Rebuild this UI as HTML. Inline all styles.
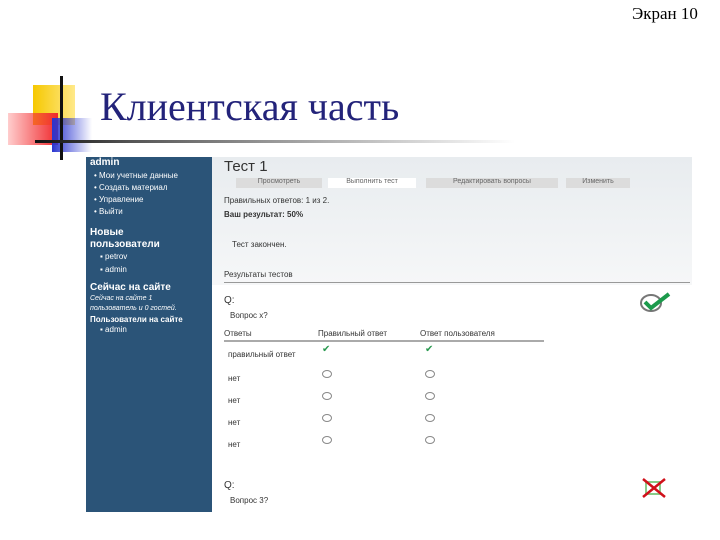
<!DOCTYPE html>
<html><head><meta charset="utf-8"><style>
body{margin:0;width:720px;height:540px;background:#fff;position:relative;overflow:hidden;font-family:"Liberation Sans","DejaVu Sans",sans-serif}
.a{position:absolute;white-space:nowrap}
.sb{color:#fff;font-size:8px}
.t{font-size:8px;color:#333}
.c{width:8px;height:6px;border:1px solid #888;border-radius:50%}
</style></head><body>
<div class="a" style="left:632px;top:4px;font:17px 'Liberation Serif',serif;color:#000">Экран 10</div>
<div class="a" style="left:33px;top:85px;width:42px;height:40px;background:linear-gradient(90deg,#f6c800,#ffe98a)"></div>
<div class="a" style="left:8px;top:113px;width:50px;height:32px;background:linear-gradient(90deg,rgba(255,90,90,0.3),#f0282c)"></div>
<div class="a" style="left:52px;top:118px;width:40px;height:34px;background:linear-gradient(90deg,#2a35d0,rgba(60,70,220,0))"></div>
<div class="a" style="left:60px;top:76px;width:3px;height:84px;background:#111"></div>
<div class="a" style="left:35px;top:140px;width:480px;height:3px;background:linear-gradient(90deg,#111,#555 20%,#999 50%,rgba(200,200,200,0))"></div>
<div class="a" style="left:100px;top:83px;font:40px 'Liberation Serif',serif;color:#23237a">Клиентская часть</div>

<div class="a" style="left:86px;top:157px;width:126px;height:355px;background:#2b5478"></div>
<div class="a" style="left:212px;top:157px;width:480px;height:128px;background:linear-gradient(180deg,#e8ecef,#f6f7f8)"></div>
<div class="a sb" style="left:90px;top:157px;font-size:10px;font-weight:bold">admin</div>
<div class="a sb" style="left:94px;top:170px;line-height:12px">• Мои учетные данные<br>• Создать материал<br>• Управление<br>• Выйти</div>
<div class="a sb" style="left:90px;top:227px;font-size:10px;line-height:12px;font-weight:bold">Новые<br>пользователи</div>
<div class="a sb" style="left:100px;top:250px;line-height:13px">▪ petrov<br>▪ admin</div>
<div class="a sb" style="left:90px;top:282px;font-size:10px;font-weight:bold">Сейчас на сайте</div>
<div class="a sb" style="left:90px;top:294px;line-height:10px;font-style:italic;font-size:7px">Сейчас на сайте 1<br>пользователь и 0 гостей.</div>
<div class="a sb" style="left:90px;top:315px;font-weight:bold">Пользователи на сайте</div>
<div class="a sb" style="left:100px;top:325px">▪ admin</div>

<div class="a" style="left:224px;top:158px;font-size:15px;color:#333">Тест 1</div>
<div class="a" style="left:236px;top:178px;width:86px;height:10px;background:#dcdcdc;font-size:7px;color:#666;text-align:center">Просмотреть</div>
<div class="a" style="left:328px;top:178px;width:88px;height:10px;background:#fff;font-size:7px;color:#666;text-align:center">Выполнить тест</div>
<div class="a" style="left:426px;top:178px;width:132px;height:10px;background:#dcdcdc;font-size:7px;color:#666;text-align:center">Редактировать вопросы</div>
<div class="a" style="left:566px;top:178px;width:64px;height:10px;background:#dcdcdc;font-size:7px;color:#666;text-align:center">Изменить</div>
<div class="a t" style="left:224px;top:196px">Правильных ответов: 1 из 2.</div>
<div class="a t" style="left:224px;top:210px;font-weight:bold">Ваш результат: 50%</div>
<div class="a t" style="left:232px;top:240px">Тест закончен.</div>
<div class="a t" style="left:224px;top:270px">Результаты тестов</div>
<div class="a" style="left:224px;top:282px;width:466px;height:1px;background:#999"></div>
<div class="a t" style="left:224px;top:295px;font-size:10px">Q:</div>
<div class="a t" style="left:230px;top:311px">Вопрос х?</div>
<div class="a t" style="left:224px;top:329px">Ответы</div>
<div class="a t" style="left:318px;top:329px">Правильный ответ</div>
<div class="a t" style="left:420px;top:329px">Ответ пользователя</div>
<div class="a" style="left:224px;top:340px;width:320px;height:2px;background:#aaa"></div>
<div class="a t" style="left:228px;top:350px">правильный ответ</div>
<div class="a" style="left:322px;top:344px;color:#2a9a50;font-size:10px">✔</div>
<div class="a" style="left:425px;top:344px;color:#2a9a50;font-size:10px">✔</div>
<div class="a t" style="left:228px;top:374px">нет</div>
<div class="a t" style="left:228px;top:396px">нет</div>
<div class="a t" style="left:228px;top:418px">нет</div>
<div class="a t" style="left:228px;top:440px">нет</div>
<div class="a c" style="left:322px;top:370px"></div><div class="a c" style="left:425px;top:370px"></div>
<div class="a c" style="left:322px;top:392px"></div><div class="a c" style="left:425px;top:392px"></div>
<div class="a c" style="left:322px;top:414px"></div><div class="a c" style="left:425px;top:414px"></div>
<div class="a c" style="left:322px;top:436px"></div><div class="a c" style="left:425px;top:436px"></div>
<div class="a t" style="left:224px;top:480px;font-size:10px">Q:</div>
<div class="a t" style="left:230px;top:496px">Вопрос 3?</div>
<svg class="a" style="left:638px;top:290px" width="34" height="24"><ellipse cx="13" cy="13" rx="10" ry="8" fill="none" stroke="#777" stroke-width="2"/><path d="M7 12 L13 18 L31 4" fill="none" stroke="#1c9a4c" stroke-width="4"/></svg>
<svg class="a" style="left:640px;top:476px" width="28" height="24"><rect x="6" y="6" width="14" height="12" fill="none" stroke="#8c8" stroke-width="2"/><path d="M3 3 L25 21 M25 3 L3 21" stroke="#d0101a" stroke-width="2.5"/></svg>
</body></html>
